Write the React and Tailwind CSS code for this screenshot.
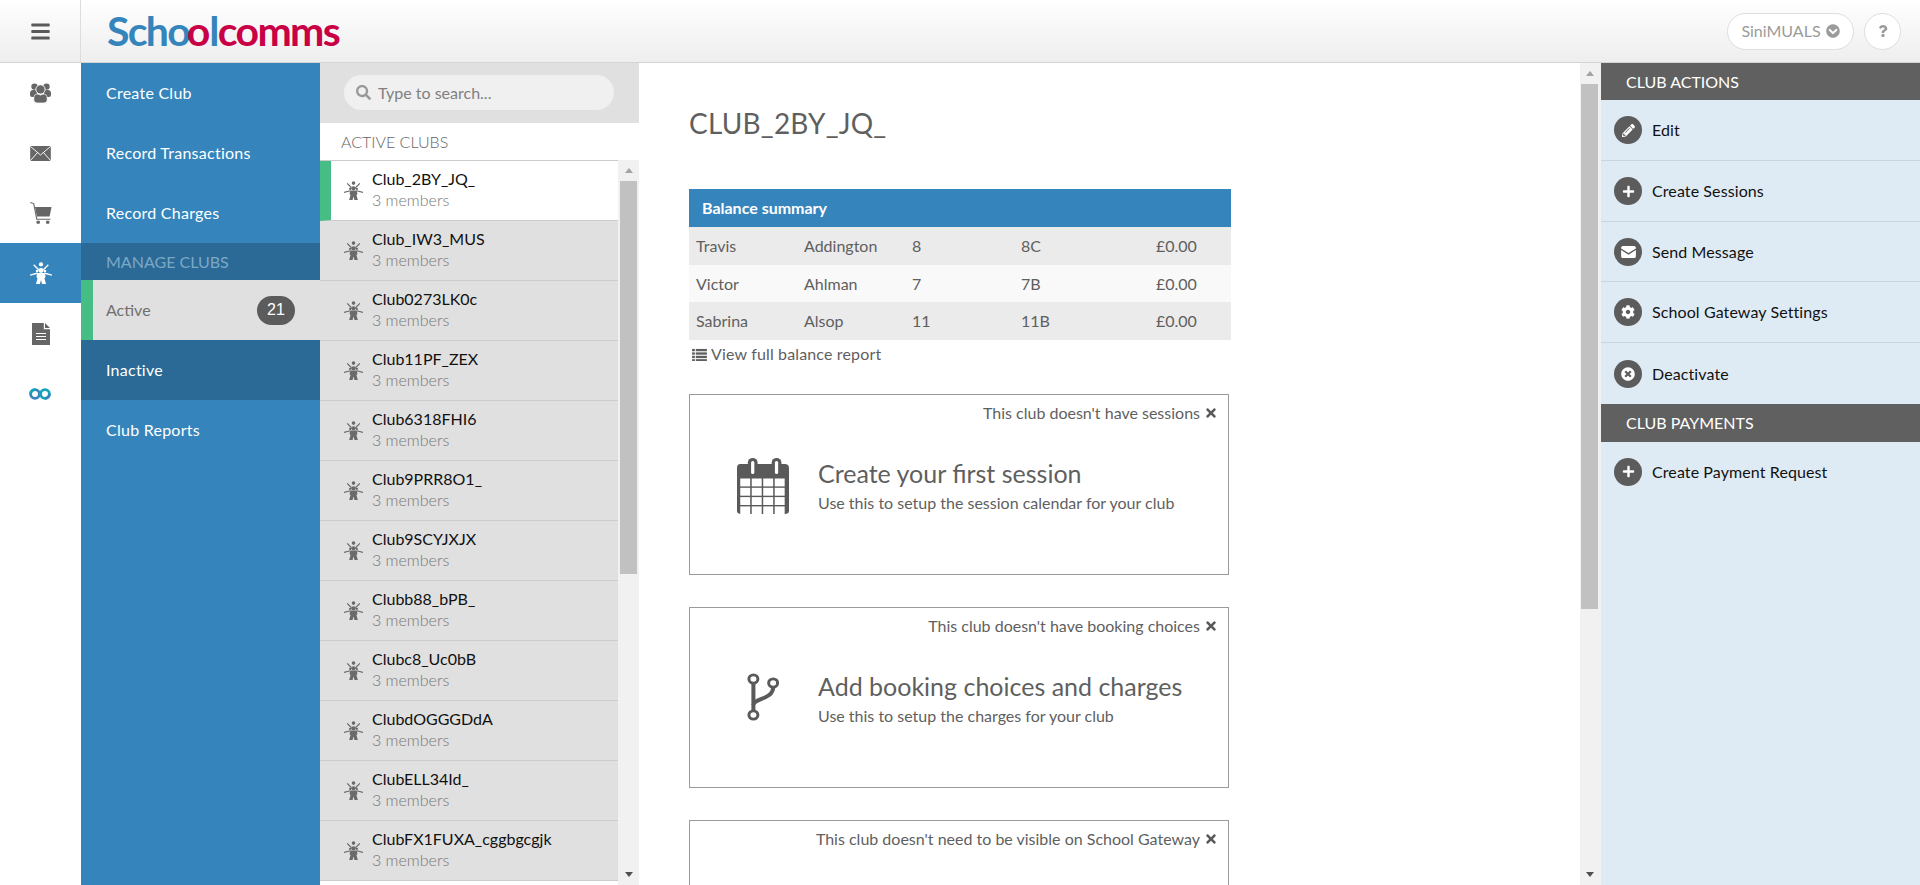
import React from "react";
import { FaBars, FaSearch, FaPencilAlt, FaPlus, FaCog, FaTimes, FaChevronCircleDown, FaQuestion, FaTimesCircle } from "react-icons/fa";

function ClubIcon({ className }) {
  return (
    <svg viewBox="0 0 24 24" fill="currentColor" className={className}>
      <circle cx="12" cy="2.6" r="2.3" />
      <path d="M4 3 L9.5 8.5 M20 3 L14.5 8.5 M0 14.3 L8 12.3 M24 14.3 L16 12.3" stroke="currentColor" strokeWidth="1.5" fill="none" />
      <circle cx="12" cy="9.2" r="2.7" />
      <circle cx="7.8" cy="9.9" r="1.5" />
      <circle cx="16.2" cy="9.9" r="1.5" />
      <path d="M8 12 H16 L17 16 L15.8 18 L17.5 24 H13.2 L12 19.5 L10.8 24 H6.5 L8.2 18 L7 16 Z" />
    </svg>
  );
}

function UsersIcon({ className }) {
  return (
    <svg viewBox="0 0 21 20" className={className}>
      <circle cx="4.5" cy="3.6" r="3.2" fill="currentColor" />
      <circle cx="16.5" cy="3.6" r="3.2" fill="currentColor" />
      <path d="M0 10.5 Q0 7 3 7 H7 V14 H2 Q0 14 0 12 Z" fill="currentColor" />
      <path d="M21 10.5 Q21 7 18 7 H14 V14 H19 Q21 14 21 12 Z" fill="currentColor" />
      <circle cx="10.5" cy="6.4" r="4.6" fill="currentColor" stroke="#fff" strokeWidth="0.9" />
      <path d="M3.8 15.5 Q3.8 11 7.5 11 L10.5 12 L13.5 11 Q17.2 11 17.2 15.5 V17 Q17.2 20 13.5 20 H7.5 Q3.8 20 3.8 17 Z" fill="currentColor" stroke="#fff" strokeWidth="0.7" />
    </svg>
  );
}

function MailIcon({ className }) {
  return (
    <svg viewBox="0 0 22 16" className={className}>
      <rect x="0" y="0" width="22" height="16" fill="currentColor" />
      <path d="M0 0.2 L11 9.6 L22 0.2 M0 15.8 L8 6.8 M22 15.8 L14 6.8" stroke="#fff" strokeWidth="1" fill="none" />
    </svg>
  );
}

function CartIcon({ className }) {
  return (
    <svg viewBox="0 0 22 22" className={className} fill="currentColor">
      <path d="M0.3 0.5 L3.7 1.6 L6.8 17.2 H20.5" stroke="currentColor" strokeWidth="1.1" fill="none" />
      <path d="M5 5 H21.5 L19.6 14.6 H6.9 Z" />
      <rect x="6.5" y="18.8" width="3.4" height="3" rx="0.8" />
      <rect x="16" y="18.8" width="3.4" height="3" rx="0.8" />
    </svg>
  );
}

function DocIcon({ className }) {
  return (
    <svg viewBox="0 0 18 22" className={className}>
      <path d="M0 0 H11.8 V6.2 H18 V22 H0 Z" fill="currentColor" />
      <path d="M13 0 L18 5 H13 Z" fill="currentColor" />
      <path d="M4 10.5 H14 M4 13.5 H14 M4 16.5 H14" stroke="#fff" strokeWidth="1.2" />
    </svg>
  );
}

function InfinityIcon({ className }) {
  return (
    <svg viewBox="0 0 22 12" className={className} fill="none" strokeWidth="2.8">
      <circle cx="6" cy="6" r="4.4" stroke="#3585bc" />
      <circle cx="16" cy="6" r="4.4" stroke="#14a3b8" />
      <path d="M1.6 6 A4.4 4.4 0 0 1 6 1.6" stroke="#14a3b8" />
      <path d="M20.4 6 A4.4 4.4 0 0 1 16 10.4" stroke="#3585bc" />
    </svg>
  );
}

function CalendarIcon({ className }) {
  const cells = [];
  for (let r = 0; r < 4; r++) {
    for (let c = 0; c < 4; c++) {
      cells.push(<rect key={`${r}-${c}`} x={3 + c * 10.6} y={20.5 + r * 9.3} width={9.2} height={7.9} fill="#fff" />);
    }
  }
  return (
    <svg viewBox="0 0 48 56" className={className} preserveAspectRatio="none">
      <path d="M3 6 H44 Q48 6 48 10 V53 Q48 56 44 56 H4 Q0 56 0 53 V10 Q0 6 3 6 Z" fill="currentColor" />
      {cells}
      <rect x="10" y="0" width="9" height="16" rx="4.5" fill="currentColor" />
      <rect x="32" y="0" width="9" height="16" rx="4.5" fill="currentColor" />
      <rect x="13" y="3" width="3" height="13" rx="1.5" fill="#fff" />
      <rect x="35" y="3" width="3" height="13" rx="1.5" fill="#fff" />
    </svg>
  );
}

function BranchIcon({ className }) {
  return (
    <svg viewBox="0 0 30 48" className={className} fill="none" stroke="currentColor" preserveAspectRatio="none">
      <circle cx="6" cy="6" r="4.2" strokeWidth="2.8" />
      <circle cx="6" cy="42" r="4.2" strokeWidth="2.8" />
      <circle cx="24.5" cy="10" r="4.2" strokeWidth="2.8" />
      <path d="M6 10 V38" strokeWidth="3.8" />
      <path d="M6 32 C6 25 24.5 27 24.5 14" strokeWidth="3.8" />
    </svg>
  );
}

function ListIcon({ className }) {
  return (
    <svg viewBox="0 0 16 14" className={className} fill="currentColor">
      <rect x="0" y="1" width="3" height="2.5" /><rect x="4" y="1" width="12" height="2.5" />
      <rect x="0" y="4.7" width="3" height="2.5" /><rect x="4" y="4.7" width="12" height="2.5" />
      <rect x="0" y="8.4" width="3" height="2.5" /><rect x="4" y="8.4" width="12" height="2.5" />
      <rect x="0" y="12" width="3" height="2" /><rect x="4" y="12" width="12" height="2" />
    </svg>
  );
}

function EnvelopeGlyph({ className }) {
  return (
    <svg viewBox="0 0 16 13" className={className} fill="#fff">
      <path d="M2 0 H14 Q16 0 16 2 V2.6 L8 7.6 L0 2.6 V2 Q0 0 2 0 Z" />
      <path d="M0 4.4 L8 9.4 L16 4.4 V11 Q16 13 14 13 H2 Q0 13 0 11 Z" />
    </svg>
  );
}

function Scrollbar({ thumbHeight, alignLeft }) {
  return (
    <div className="w-[21px] shrink-0 bg-[#f1f1f1]">
      <div className={`w-[17px] h-full flex flex-col ${alignLeft ? "ml-[1px]" : "ml-[2px]"}`}>
        <div className="h-[21px] shrink-0 flex items-center justify-center">
          <div className="w-0 h-0 border-l-[4.5px] border-r-[4.5px] border-b-[5px] border-l-transparent border-r-transparent border-b-[#a3a3a3]"></div>
        </div>
        <div className="w-[17px] bg-[#c1c1c1]" style={{ height: thumbHeight }}></div>
        <div className="grow"></div>
        <div className="h-[21px] shrink-0 flex items-center justify-center">
          <div className="w-0 h-0 border-l-[4.5px] border-r-[4.5px] border-t-[5px] border-l-transparent border-r-transparent border-t-[#505050]"></div>
        </div>
      </div>
    </div>
  );
}

const NAV = [
  { key: "users", icon: <UsersIcon className="w-[21px] h-[20px]" /> },
  { key: "mail", icon: <MailIcon className="w-[21px] h-[15px]" /> },
  { key: "cart", icon: <CartIcon className="w-[22px] h-[22px]" /> },
  { key: "club", icon: <ClubIcon className="w-[22px] h-[22px]" />, active: true },
  { key: "doc", icon: <DocIcon className="w-[18px] h-[22px] mt-[1px]" /> },
  { key: "inf", icon: <InfinityIcon className="w-[22px] h-[12px] mt-[1px] -ml-[1px]" /> },
];

const CLUBS = [
  "Club_2BY_JQ_", "Club_IW3_MUS", "Club0273LK0c", "Club11PF_ZEX", "Club6318FHI6", "Club9PRR8O1_",
  "Club9SCYJXJX", "Clubb88_bPB_", "Clubc8_Uc0bB", "ClubdOGGGDdA", "ClubELL34Id_", "ClubFX1FUXA_cggbgcgjk",
];

const BALANCES = [
  ["Travis", "Addington", "8", "8C", "£0.00", "bg-[#ebebeb] h-[38px]"],
  ["Victor", "Ahlman", "7", "7B", "£0.00", "bg-[#f9f9f9] h-[37px]"],
  ["Sabrina", "Alsop", "11", "11B", "£0.00", "bg-[#ebebeb] h-[38px]"],
];

function SideLink({ children }) {
  return <div className="h-[60px] flex items-center pl-[25px] text-white text-[16px] tracking-[0.25px]">{children}</div>;
}

function Prompt({ note, icon, title, text }) {
  return (
    <div className="h-[181px] w-[540px] shrink-0 border border-[#9a9a9a] mb-[32px] px-[10px] pt-[8px]">
      <div className="flex items-center justify-end gap-[4px] text-[16px] leading-[20px] text-[#5f5f5f]">
        <span>{note}</span>
        <FaTimes className="w-[14px] h-[14px] text-[#5a5a5a]" />
      </div>
      {title && (
        <div className="flex items-start mt-[35px]">
          <div className="w-[118px] shrink-0 pl-[8px] h-[56px] flex items-center justify-center text-[#5a5a5a]">{icon}</div>
          <div className="-mt-[1px]">
            <div className="text-[25px] leading-[32px] text-[#5f5f5f]">{title}</div>
            <div className="text-[16px] leading-[20px] mt-[4px] text-[#5f5f5f]">{text}</div>
          </div>
        </div>
      )}
    </div>
  );
}

function ActionRow({ icon, label, last, h = "h-[61px]" }) {
  return (
    <div className={`${h} flex items-center pl-[13px] gap-[10px] text-[16px] tracking-[0.1px] text-[#111] ${last ? "" : "border-b border-[#c8d4de]"}`}>
      <div className="w-[28px] h-[28px] rounded-full bg-[#5c5c5c] flex items-center justify-center text-white shrink-0">{icon}</div>
      <span>{label}</span>
    </div>
  );
}

export default function App() {
  return (
    <div className="h-[885px] w-full overflow-hidden flex flex-col bg-white text-[#5f5f5f] font-['Lato','Open_Sans',sans-serif]">
      <header className="h-[63px] shrink-0 flex bg-gradient-to-b from-white to-[#eeeeee] border-b border-[#d4d4d4]">
        <div className="w-[81px] shrink-0 border-r border-[#dddddd] flex items-center justify-center text-[#5a5a5a]">
          <FaBars className="w-[21px] h-[21px]" />
        </div>
        <div className="flex items-center pl-[26px] text-[41px] font-bold leading-none tracking-[-1.7px] -mt-[1px]">
          <span className="text-[#3585bc]">Sch</span>
          <span className="text-[#3585bc] tracking-[-4px]">o</span>
          <span className="text-[#c90045] tracking-[-1px]">o</span>
          <span className="text-[#3585bc]">l</span>
          <span className="text-[#c90045]">comms</span>
        </div>
        <div className="grow"></div>
        <div className="flex items-center gap-[10px] pr-[19px]">
          <div className="h-[37px] w-[127px] rounded-full border border-[#dedede] bg-white flex items-center justify-center gap-[5px] text-[16px] text-[#9b9b9b]">
            <span>SiniMUALS</span>
            <FaChevronCircleDown className="w-[14px] h-[14px]" />
          </div>
          <div className="h-[37px] w-[37px] rounded-full border border-[#dedede] bg-white flex items-center justify-center text-[#9b9b9b]">
            <FaQuestion className="w-[12px] h-[12px]" />
          </div>
        </div>
      </header>

      <div className="flex grow min-h-0">
        <nav className="w-[81px] shrink-0 bg-white">
          {NAV.map((n) => (
            <div key={n.key} className={`h-[60px] flex items-center justify-center ${n.active ? "bg-[#3585bc] text-white" : "text-[#666666]"}`}>
              {n.icon}
            </div>
          ))}
        </nav>

        <div className="w-[239px] shrink-0 bg-[#3585bc]">
          <SideLink>Create Club</SideLink>
          <SideLink>Record Transactions</SideLink>
          <SideLink>Record Charges</SideLink>
          <div className="h-[37px] bg-[#2b6a96] flex items-center pl-[25px] text-[16px] text-[#7ba8c6] uppercase">Manage Clubs</div>
          <div className="h-[60px] bg-[#e0e0e0] flex items-center border-l-[12px] border-[#45bd85] pl-[13px] pr-[25px] text-[16px] text-[#707070] justify-between">
            <span>Active</span>
            <span className="w-[38px] h-[29px] rounded-full bg-[#5c5c5c] text-white flex items-center justify-center font-['Liberation_Sans',sans-serif]">21</span>
          </div>
          <div className="h-[60px] bg-[#2b6a96] flex items-center pl-[25px] text-white text-[16px] tracking-[0.25px]">Inactive</div>
          <SideLink>Club Reports</SideLink>
        </div>

        <div className="w-[319px] shrink-0 flex flex-col min-h-0">
          <div className="h-[60px] shrink-0 bg-[#e0e0e0] pt-[12px] pl-[24px] pr-[25px]">
            <div className="h-[35px] rounded-full bg-[#f0f0f0] flex items-center pl-[12px] gap-[7px] text-[16px] text-[#808080]">
              <FaSearch className="w-[15px] h-[15px] text-[#999999]" />
              <span>Type to search...</span>
            </div>
          </div>
          <div className="h-[37px] shrink-0 flex items-center pl-[21px] text-[16px] font-light uppercase text-[#666666]">Active Clubs</div>
          <div className="flex grow min-h-0">
            <div className="w-[298px] shrink-0 overflow-hidden border-t border-[#cccccc]">
              {CLUBS.map((c, i) => (
                <div key={c} className={`h-[60px] flex items-center border-b border-[#cccccc] ${i === 0 ? "bg-white border-l-[11px] border-l-[#45bd85] pl-[13px]" : "bg-[#e0e0e0] pl-[24px]"}`}>
                  <ClubIcon className="w-[19px] h-[19px] text-[#6a6a6a] shrink-0" />
                  <div className="ml-[9px] -mt-[3px]">
                    <div className="text-[16px] leading-[20px] text-[#111111]">{c}</div>
                    <div className="text-[16px] leading-[20px] font-light text-[#777777] mt-[1px]">3 members</div>
                  </div>
                </div>
              ))}
            </div>
            <Scrollbar thumbHeight={393} />
          </div>
        </div>

        <main className="grow min-w-0 flex">
          <div className="grow min-w-0 pl-[50px] overflow-hidden">
            <h1 className="text-[28px] tracking-[0.2px] leading-[36px] mt-[42px] text-[#5f5f5f] uppercase font-normal">Club_2BY_JQ_</h1>
            <div className="w-[542px] mt-[48px]">
              <div className="h-[38px] bg-[#3585bc] flex items-center pl-[13px] text-white font-bold text-[16px]">Balance summary</div>
              {BALANCES.map((r) => (
                <div key={r[0]} className={`${r[5]} grid grid-cols-[108px_108px_109px_135px_1fr] items-center pl-[7px] text-[16px] text-[#5f5f5f]`}>
                  <span>{r[0]}</span>
                  <span>{r[1]}</span>
                  <span>{r[2]}</span>
                  <span>{r[3]}</span>
                  <span>{r[4]}</span>
                </div>
              ))}
              <div className="h-[24px] flex items-center pl-[3px] gap-[4px] text-[16px] tracking-[0.15px] text-[#5f5f5f] mt-[2px]">
                <ListIcon className="w-[15px] h-[13px]" />
                <span>View full balance report</span>
              </div>
            </div>
            <div className="mt-[28px] flex flex-col">
              <Prompt note="This club doesn't have sessions" icon={<CalendarIcon className="w-[52px] h-[56px]" />} title="Create your first session" text="Use this to setup the session calendar for your club" />
              <Prompt note="This club doesn't have booking choices" icon={<BranchIcon className="w-[32px] h-[48px] mb-[4px]" />} title="Add booking choices and charges" text="Use this to setup the charges for your club" />
              <Prompt note="This club doesn't need to be visible on School Gateway" />
            </div>
          </div>
          <Scrollbar thumbHeight={525} alignLeft />
        </main>

        <aside className="w-[319px] shrink-0 bg-[#dfebf4]">
          <div className="h-[37px] bg-[#606060] flex items-center pl-[25px] text-white text-[16px] uppercase">Club Actions</div>
          <ActionRow icon={<FaPencilAlt className="w-[13px] h-[13px]" />} label="Edit" />
          <ActionRow icon={<FaPlus className="w-[13px] h-[13px]" />} label="Create Sessions" />
          <ActionRow icon={<EnvelopeGlyph className="w-[15px] h-[12px]" />} label="Send Message" h="h-[60px]" />
          <ActionRow icon={<FaCog className="w-[14px] h-[14px]" />} label="School Gateway Settings" />
          <ActionRow icon={<FaTimesCircle className="w-[14px] h-[14px]" />} label="Deactivate" last />
          <div className="h-[38px] bg-[#606060] flex items-center pl-[25px] text-white text-[16px] uppercase">Club Payments</div>
          <ActionRow icon={<FaPlus className="w-[13px] h-[13px]" />} label="Create Payment Request" last h="h-[59px]" />
        </aside>
      </div>
    </div>
  );
}
